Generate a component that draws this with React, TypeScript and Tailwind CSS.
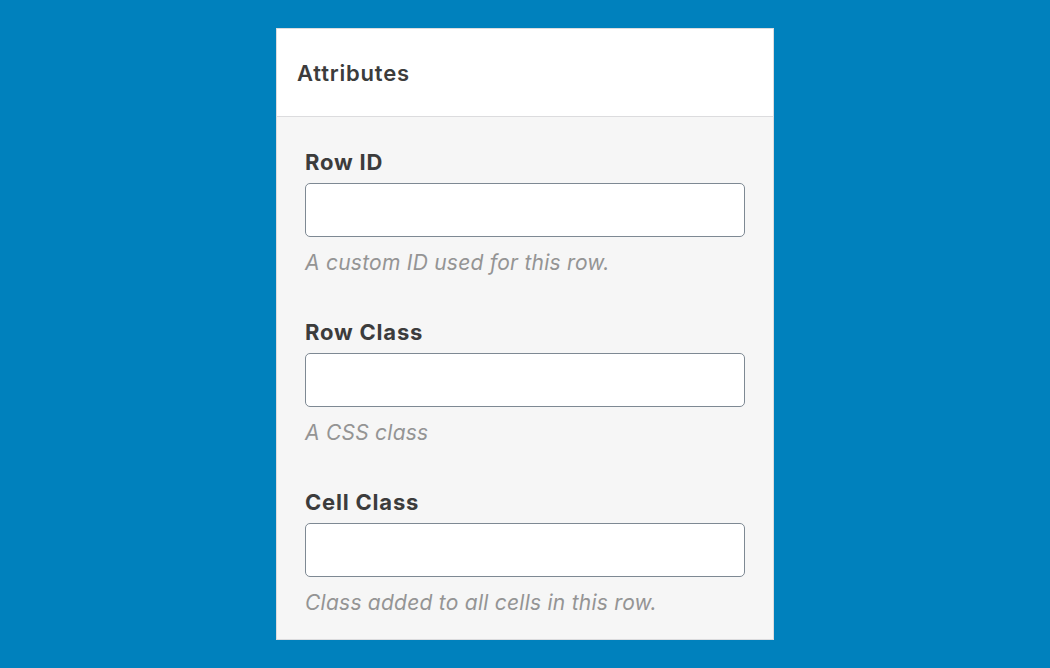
const fields = [
  { label: "Row ID", help: "A custom ID used for this row." },
  { label: "Row Class", help: "A CSS class" },
  { label: "Cell Class", help: "Class added to all cells in this row." },
];

export default function App() {
  return (
    <div
      className="flex h-[668px] w-[1050px] items-start bg-[#0081bd] pl-[276px] pt-[28px]"
      style={{ fontFamily: "Inter, 'Liberation Sans', sans-serif" }}
    >
      <div className="flex h-[612px] w-[498px] flex-col border border-[#dcdcde] bg-[#f6f6f6]">
        <div className="flex h-[88px] items-center border-b border-[#dcdcde] bg-white pl-[20px]">
          <h2 className="text-[22px] font-semibold leading-6 tracking-[0.8px] text-[#3c3c3c]">Attributes</h2>
        </div>
        <div className="flex flex-col gap-[45px] px-[28px] pt-[33px]">
          {fields.map((f) => (
            <div key={f.label} className="flex flex-col">
              <label className="text-[22px] font-bold leading-6 tracking-[0.8px] text-[#3c3c3c]">{f.label}</label>
              <input
                type="text"
                className="mt-[9px] h-[54px] w-full rounded-[5px] border border-[#7e8993] bg-white"
              />
              <p className="mt-[14px] text-[21px] italic leading-6 tracking-[0.25px] text-[#949494]">{f.help}</p>
            </div>
          ))}
        </div>
      </div>
    </div>
  );
}
